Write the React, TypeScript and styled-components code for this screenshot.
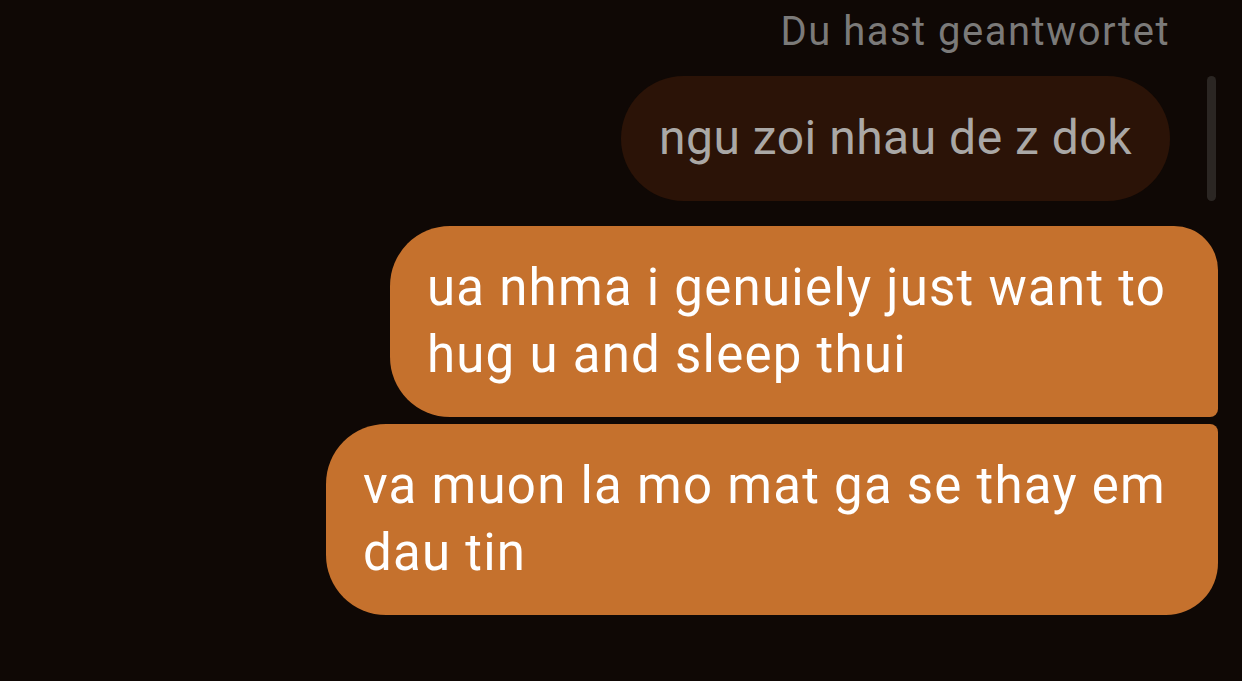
import React from "react";
import styled, { createGlobalStyle } from "styled-components";

const Global = createGlobalStyle`
  html, body { margin: 0; padding: 0; background: #0f0805; }
  body { font-family: Roboto, "Noto Sans", sans-serif; }
`;

const Screen = styled.div`
  width: 1242px;
  height: 681px;
  background: #0f0805;
  display: flex;
  flex-direction: column;
  align-items: flex-end;
  padding: 10px 24px 0 0;
  box-sizing: border-box;
  overflow: hidden;
`;

const ReplyLabel = styled.div`
  font-size: 40px;
  line-height: 44px;
  letter-spacing: 1.5px;
  color: #7b7a79;
  margin-right: 48px;
`;

const ReplyRow = styled.div`
  display: flex;
  align-items: stretch;
  gap: 37px;
  margin-top: 22px;
`;

const ReplyBubble = styled.div`
  background: #2b1307;
  color: #aaa8a6;
  font-size: 48px;
  line-height: 60px;
  letter-spacing: 0.5px;
  padding: 32px 38px 33px 38px;
  border-radius: 63px;
`;

const ScrollThumb = styled.div`
  width: 9px;
  margin-right: 2px;
  border-radius: 5px;
  background: #2b2623;
`;

const Group = styled.div`
  display: flex;
  flex-direction: column;
  align-items: flex-end;
  gap: 7px;
  margin-top: 25px;
`;

const Bubble = styled.div<{ $pos: "first" | "last" }>`
  background: #c5712d;
  color: #ffffff;
  font-size: 51px;
  line-height: 67px;
  letter-spacing: 1.25px;
  padding: 28px 52px 29px 37px;
  border-radius: ${(p) =>
    p.$pos === "first" ? "60px 44px 8px 60px" : "60px 8px 52px 60px"};
`;

export default function App() {
  return (
    <>
      <Global />
      <Screen>
        <ReplyLabel>Du hast geantwortet</ReplyLabel>
        <ReplyRow>
          <ReplyBubble>ngu zoi nhau de z dok</ReplyBubble>
          <ScrollThumb />
        </ReplyRow>
        <Group>
          <Bubble $pos="first">
            ua nhma i genuiely just want to
            <br />
            hug u and sleep thui
          </Bubble>
          <Bubble $pos="last">
            va muon la mo mat ga se thay em
            <br />
            dau tin
          </Bubble>
        </Group>
      </Screen>
    </>
  );
}
